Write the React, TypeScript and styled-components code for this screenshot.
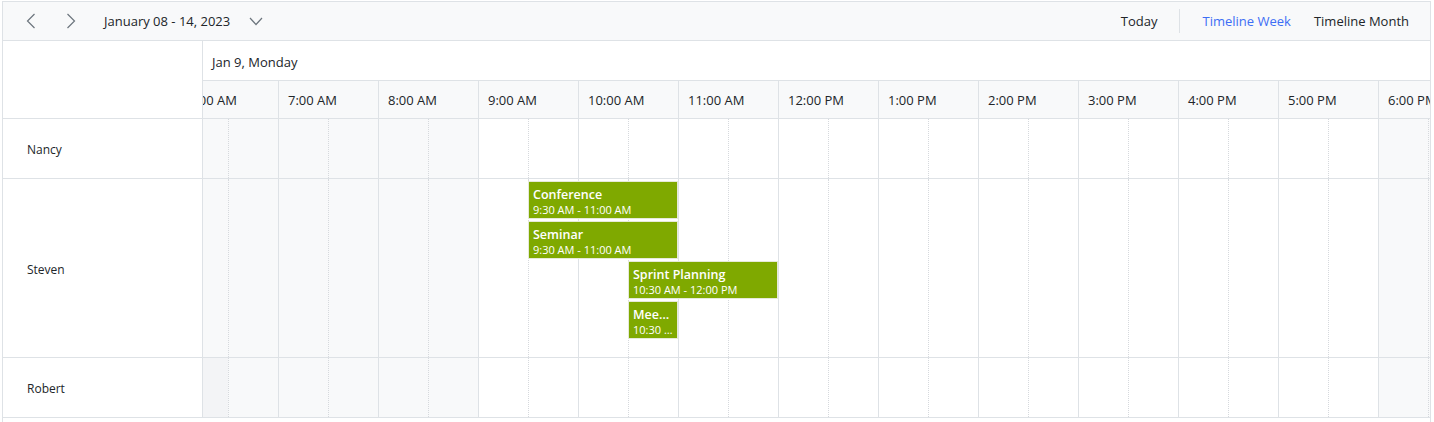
import React from "react";
import styled, { createGlobalStyle } from "styled-components";

const Global = createGlobalStyle`
  html, body { margin: 0; padding: 0; background: #fff; }
  body { font-family: "Segoe UI", "Open Sans", "Noto Sans", sans-serif; color: #212529; }
  * { box-sizing: border-box; }
`;

const LINE = "#dee2e6";
const OFF = "#f8f9fa";

const Scheduler = styled.div`
  margin: 1px 0 0 2px;
  width: 1429px;
  border: 1px solid ${LINE};
  border-bottom: none;
  background: #fff;
  height: 421px;
  overflow: hidden;
`;

const Toolbar = styled.div`
  height: 39px;
  background: ${OFF};
  border-bottom: 1px solid ${LINE};
  display: flex;
  align-items: center;
  padding: 0 21px 0 11px;
`;

const IconBtn = styled.button`
  border: none;
  background: transparent;
  width: 34px;
  height: 30px;
  padding: 0;
  display: flex;
  align-items: center;
  justify-content: center;
  margin-right: 6px;
  cursor: pointer;
`;

const DateRange = styled.div`
  display: flex;
  align-items: center;
  gap: 19px;
  font-size: 13px;
  margin-left: 10px;
`;

const Spacer = styled.div`
  flex: 1;
`;

const ViewBtn = styled.span<{ $active?: boolean }>`
  font-size: 13px;
  color: ${(p) => (p.$active ? "#3d6ef5" : "#212529")};
  margin-left: 23px;
`;

const Sep = styled.div`
  width: 1px;
  height: 24px;
  background: ${LINE};
  margin-left: 22px;
  margin-right: -1px;
`;

const Body = styled.div`
  display: grid;
  grid-template-columns: 200px 1fr;
`;

const ResColumn = styled.div`
  border-right: 1px solid ${LINE};
`;

const Corner = styled.div`
  height: 78px;
  border-bottom: 1px solid ${LINE};
`;

const ResCell = styled.div<{ $h: number }>`
  height: ${(p) => p.$h}px;
  border-bottom: 1px solid ${LINE};
  display: flex;
  align-items: center;
  padding: 2px 0 0 24px;
  font-size: 12px;
  color: #212529;
`;

const Timeline = styled.div`
  overflow: hidden;
  min-width: 0;
`;

const DateRow = styled.div`
  height: 40px;
  border-bottom: 1px solid ${LINE};
  display: flex;
  align-items: center;
  padding: 2px 0 0 9px;
  font-size: 13px;
`;

const Track = styled.div`
  margin-left: -25px;
  width: 1400px;
`;

const HourRow = styled.div<{ $h: number }>`
  display: flex;
  height: ${(p) => p.$h}px;
  border-bottom: 1px solid ${LINE};
  position: relative;
`;

const HourLabel = styled.div`
  width: 100px;
  flex: none;
  border-left: 1px solid ${LINE};
  display: flex;
  align-items: center;
  padding-left: 9px;
  font-size: 13px;
  white-space: nowrap;
  background: ${OFF};
`;

const Slot = styled.div<{ $half?: boolean; $off?: boolean; $hover?: boolean }>`
  width: 50px;
  flex: none;
  border-left: 1px ${(p) => (p.$half ? "dotted" : "solid")} ${(p) => (p.$half ? "#d6d9dd" : LINE)};
  background: ${(p) => (p.$hover ? "#f3f4f6" : p.$off ? OFF : "#fff")};
`;

const Event = styled.div`
  position: absolute;
  height: 36px;
  background: #7fa900;
  color: #fff;
  padding: 4px 4px 0;
  overflow: hidden;
  white-space: nowrap;
  outline: 1px solid #e6ead9;
`;

const EvTitle = styled.div`
  font-size: 12.5px;
  font-weight: 600;
  line-height: 17px;
  overflow: hidden;
  text-overflow: ellipsis;
`;

const EvTime = styled.div`
  font-size: 11px;
  line-height: 13px;
  overflow: hidden;
  text-overflow: ellipsis;
`;

const hours = ["6:00 AM", "7:00 AM", "8:00 AM", "9:00 AM", "10:00 AM", "11:00 AM", "12:00 PM", "1:00 PM", "2:00 PM", "3:00 PM", "4:00 PM", "5:00 PM", "6:00 PM", "7:00 PM"];

const resources = [
  { name: "Nancy", h: 59 },
  { name: "Steven", h: 178 },
  { name: "Robert", h: 59 },
];

const events = [
  { title: "Conference", time: "9:30 AM - 11:00 AM", start: 9.5, end: 11, lane: 0 },
  { title: "Seminar", time: "9:30 AM - 11:00 AM", start: 9.5, end: 11, lane: 1 },
  { title: "Sprint Planning", time: "10:30 AM - 12:00 PM", start: 10.5, end: 12, lane: 2 },
  { title: "Meeting", time: "10:30 AM - 11:00 AM", start: 10.5, end: 11, lane: 3 },
];

const Chevron = ({ dir }: { dir: "left" | "right" }) => (
  <svg width="10" height="16" viewBox="0 0 10 16" fill="none">
    <path
      d={dir === "left" ? "M8.5 1 L1.5 8 L8.5 15" : "M1.5 1 L8.5 8 L1.5 15"}
      stroke="#6c757d"
      strokeWidth="1.2"
    />
  </svg>
);

const Down = () => (
  <svg width="14" height="9" viewBox="0 0 14 9" fill="none">
    <path d="M1 1 L7 7.5 L13 1" stroke="#6c757d" strokeWidth="1.2" />
  </svg>
);

export default function App() {
  return (
    <>
      <Global />
      <Scheduler>
        <Toolbar>
          <IconBtn aria-label="Previous">
            <Chevron dir="left" />
          </IconBtn>
          <IconBtn aria-label="Next">
            <Chevron dir="right" />
          </IconBtn>
          <DateRange>
            <span>January 08 - 14, 2023</span>
            <Down />
          </DateRange>
          <Spacer />
          <ViewBtn>Today</ViewBtn>
          <Sep />
          <ViewBtn $active>Timeline Week</ViewBtn>
          <ViewBtn>Timeline Month</ViewBtn>
        </Toolbar>
        <Body>
          <ResColumn>
            <Corner />
            {resources.map((r) => (
              <ResCell key={r.name} $h={r.h + 1}>
                {r.name}
              </ResCell>
            ))}
          </ResColumn>
          <Timeline>
            <DateRow>Jan 9, Monday</DateRow>
            <Track>
              <HourRow $h={38}>
                {hours.map((h) => (
                  <HourLabel key={h}>{h}</HourLabel>
                ))}
              </HourRow>
              {resources.map((r, ri) => (
                <HourRow key={r.name} $h={r.h + 1}>
                  {hours.map((h, i) => {
                    const hour = 6 + i;
                    const off = hour < 9 || hour >= 18;
                    return (
                      <React.Fragment key={h}>
                        <Slot $off={off} $hover={ri === 2 && i === 0} />
                        <Slot $half $off={off} />
                      </React.Fragment>
                    );
                  })}
                  {r.name === "Steven" &&
                    events.map((e) => (
                      <Event
                        key={e.title}
                        style={{
                          left: (e.start - 6) * 100 + 1,
                          width: (e.end - e.start) * 100 - 2,
                          top: 3 + e.lane * 40,
                        }}
                      >
                        <EvTitle>{e.title}</EvTitle>
                        <EvTime>{e.time}</EvTime>
                      </Event>
                    ))}
                </HourRow>
              ))}
            </Track>
          </Timeline>
        </Body>
      </Scheduler>
    </>
  );
}
